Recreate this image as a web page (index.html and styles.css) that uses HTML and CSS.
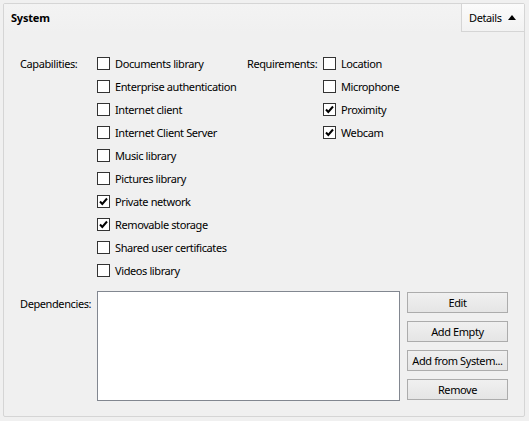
FILE: index.html
```html
<!DOCTYPE html>
<html>
<head>
<meta charset="utf-8">
<link rel="stylesheet" href="styles.css">
</head>
<body>
<div class="panel">
  <div class="header">
    <div class="title">System</div>
    <div class="details">Details <span class="tri"></span></div>
  </div>
  <div class="content">
    <div class="checks">
      <div class="label caps-label">Capabilities:</div>
      <div class="list caps-list">
        <div class="row"><span class="cb"></span>Documents library</div>
        <div class="row"><span class="cb"></span>Enterprise authentication</div>
        <div class="row"><span class="cb"></span>Internet client</div>
        <div class="row"><span class="cb"></span>Internet Client Server</div>
        <div class="row"><span class="cb"></span>Music library</div>
        <div class="row"><span class="cb"></span>Pictures library</div>
        <div class="row"><span class="cb checked"><svg viewBox="0 0 11 11" width="11" height="11"><path d="M2 5.5 L4.3 8 L9 2.5" fill="none" stroke="#000" stroke-width="2"/></svg></span>Private network</div>
        <div class="row"><span class="cb checked"><svg viewBox="0 0 11 11" width="11" height="11"><path d="M2 5.5 L4.3 8 L9 2.5" fill="none" stroke="#000" stroke-width="2"/></svg></span>Removable storage</div>
        <div class="row"><span class="cb"></span>Shared user certificates</div>
        <div class="row"><span class="cb"></span>Videos library</div>
      </div>
      <div class="label req-label">Requirements:</div>
      <div class="list req-list">
        <div class="row"><span class="cb"></span>Location</div>
        <div class="row"><span class="cb"></span>Microphone</div>
        <div class="row"><span class="cb checked"><svg viewBox="0 0 11 11" width="11" height="11"><path d="M2 5.5 L4.3 8 L9 2.5" fill="none" stroke="#000" stroke-width="2"/></svg></span>Proximity</div>
        <div class="row"><span class="cb checked"><svg viewBox="0 0 11 11" width="11" height="11"><path d="M2 5.5 L4.3 8 L9 2.5" fill="none" stroke="#000" stroke-width="2"/></svg></span>Webcam</div>
      </div>
    </div>
    <div class="deps">
      <div class="label deps-label">Dependencies:</div>
      <div class="listbox"></div>
      <div class="buttons">
        <div class="btn">Edit</div>
        <div class="btn">Add Empty</div>
        <div class="btn">Add from System...</div>
        <div class="btn">Remove</div>
      </div>
    </div>
  </div>
</div>
</body>
</html>
```

FILE: styles.css
```css
html, body {
  margin: 0;
  padding: 0;
  background: #f0f0f0;
}
body {
  font-family: "Noto Sans", "Open Sans", sans-serif;
  font-size: 11px;
  letter-spacing: -0.4px;
  color: #000;
  padding: 3px;
  width: 529px;
  height: 421px;
  box-sizing: border-box;
}
.panel {
  width: 522px;
  height: 414px;
  box-sizing: border-box;
  border: 1px solid #d5d5d5;
  border-radius: 2px;
  background: #f0f0f0;
  display: flex;
  flex-direction: column;
}
.header {
  height: 28px;
  display: flex;
  justify-content: space-between;
  background: linear-gradient(#f3f3f3, #f0f0f0);
}
.title {
  font-weight: bold;
  padding-left: 7px;
  line-height: 28px;
  letter-spacing: -0.2px;
}
.details {
  width: 63px;
  box-sizing: border-box;
  border-left: 1px solid #d5d5d5;
  border-bottom: 1px solid #d5d5d5;
  background: linear-gradient(#fbfbfb, #f2f2f2);
  padding-left: 7px;
  line-height: 27px;
  display: flex;
  align-items: center;
  gap: 6px;
}
.tri {
  width: 0;
  height: 0;
  border-left: 4px solid transparent;
  border-right: 4px solid transparent;
  border-bottom: 5px solid #000;
  margin-top: -1px;
}
.content {
  padding: 20px 0 0 16px;
}
.checks {
  display: flex;
}
.label {
  line-height: 23px;
}
.caps-label { width: 77px; }
.caps-list { width: 150px; }
.req-label { width: 76px; }
.row {
  height: 23px;
  display: flex;
  align-items: center;
}
.cb {
  width: 13px;
  height: 13px;
  box-sizing: border-box;
  border: 1px solid #333;
  background: #fff;
  margin-right: 5px;
  display: flex;
  align-items: center;
  justify-content: center;
}
.cb svg { display: block; }
.deps {
  display: flex;
  margin-top: 9px;
}
.deps-label {
  width: 77px;
  line-height: 1;
  padding-top: 7px;
}
.listbox {
  width: 303px;
  height: 110px;
  box-sizing: border-box;
  border: 1px solid #828790;
  background: #fff;
}
.buttons {
  margin-left: 7px;
  display: flex;
  flex-direction: column;
  gap: 8px;
  padding-top: 1px;
}
.btn {
  width: 101px;
  height: 21px;
  box-sizing: border-box;
  border: 1px solid #acacac;
  background: linear-gradient(#f0f0f0, #e5e5e5);
  text-align: center;
  line-height: 19px;
  white-space: nowrap;
}
```
